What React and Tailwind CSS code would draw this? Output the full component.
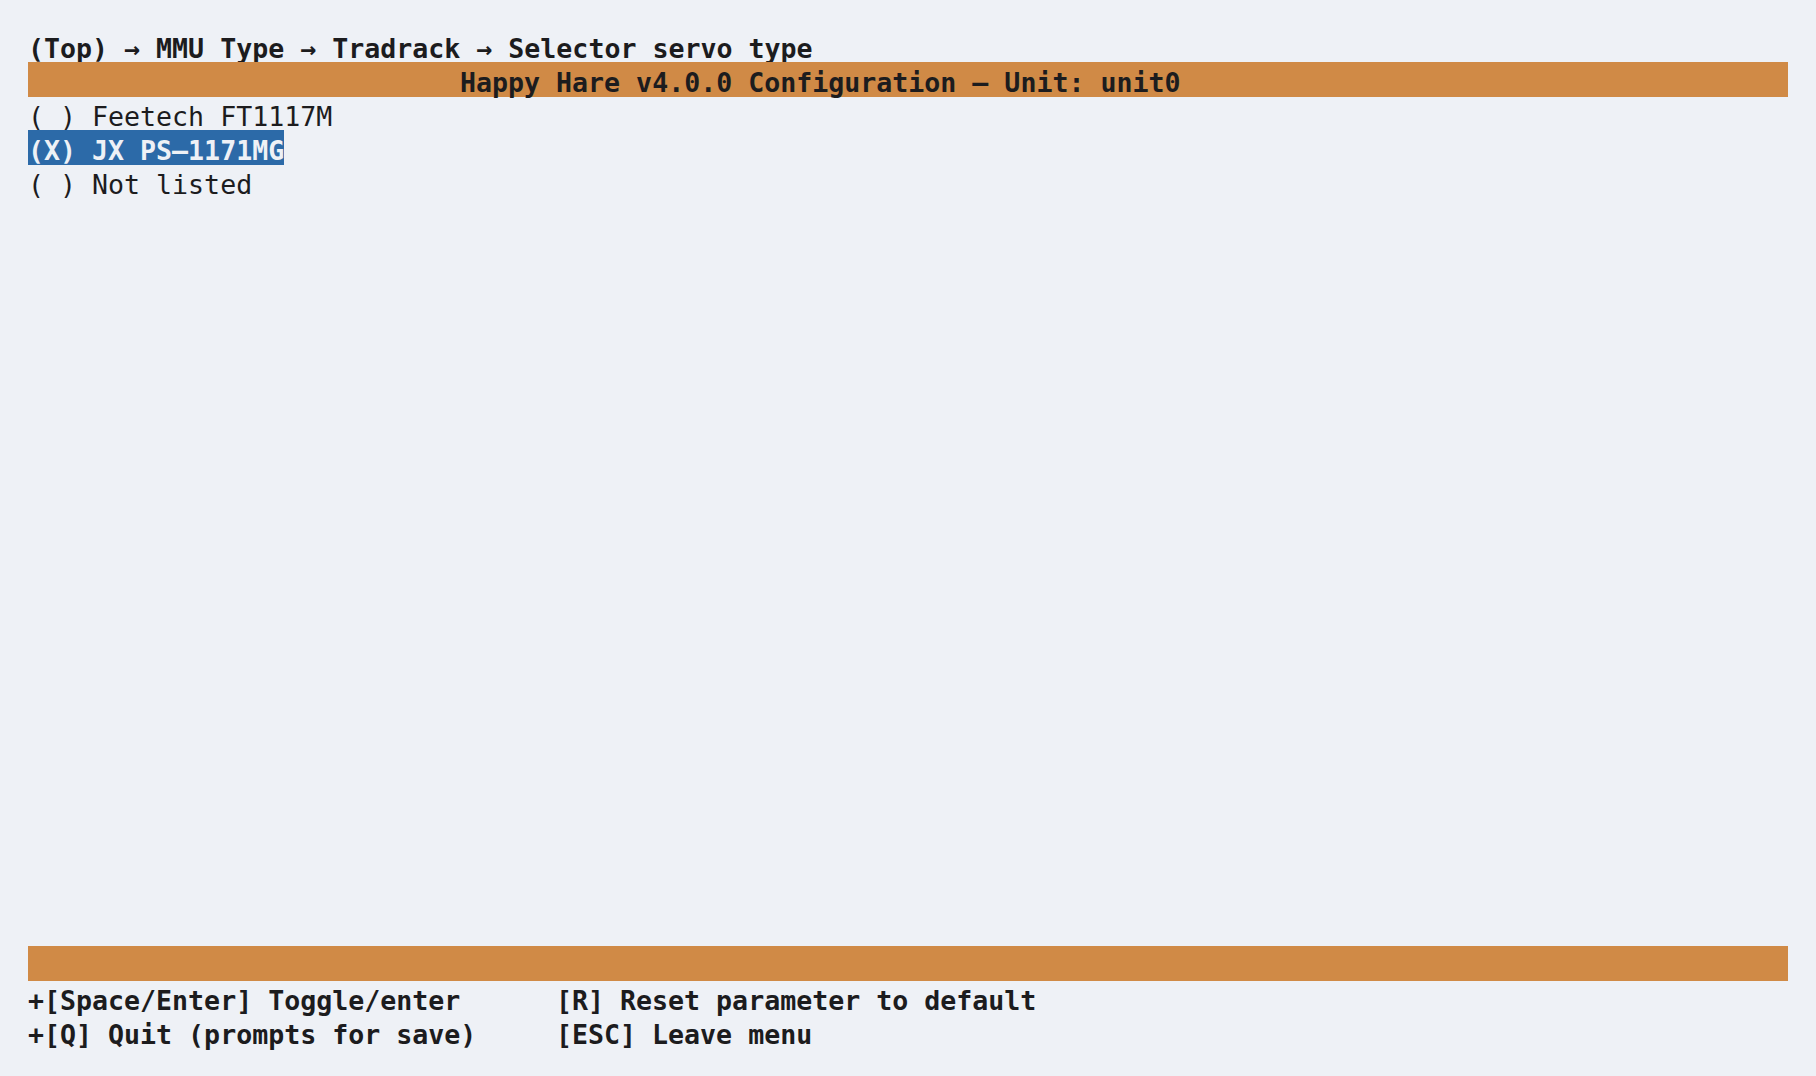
import React from "react";

const items = [
  { label: "( ) Feetech FT1117M", selected: false },
  { label: "(X) JX PS–1171MG", selected: true },
  { label: "( ) Not listed", selected: false },
];

// each terminal row is 34px; text sits a bit low in its cell
const row = "h-[34px] pt-[7px] leading-[27px] whitespace-pre";

const App = () => {
  return (
    <div
      className="h-[1076px] w-[1816px] bg-[#eef1f6] p-[28px] text-[26.6px] text-[#1c1c1e] flex flex-col"
      style={{ fontFamily: '"DejaVu Sans Mono", "Liberation Mono", monospace' }}
    >
      <div className={`${row} font-bold`}>(Top) → MMU Type → Tradrack → Selector servo type</div>
      <div className={`${row} h-[35px] bg-[#d08a46] pl-[432px] font-bold`}>
        Happy Hare v4.0.0 Configuration – Unit: unit0
      </div>
      <div className="flex flex-col items-start -mt-px">
        {items.map((item) => (
          <div
            key={item.label}
            className={`${row} ${item.selected ? "bg-[#2c6aa8] text-[#eef1f6] font-bold h-[35px] -mb-px" : ""}`}
          >
            {item.label}
          </div>
        ))}
      </div>
      <div className="flex-1" />
      <div className="h-[35px] bg-[#d08a46]" />
      <div className="flex flex-col font-bold -mt-px">
        <div className={`${row} flex`}>
          <span className="w-[528px]">+[Space/Enter] Toggle/enter</span>
          <span>[R] Reset parameter to default</span>
        </div>
        <div className={`${row} flex`}>
          <span className="w-[528px]">+[Q] Quit (prompts for save)</span>
          <span>[ESC] Leave menu</span>
        </div>
      </div>
    </div>
  );
};

export default App;
